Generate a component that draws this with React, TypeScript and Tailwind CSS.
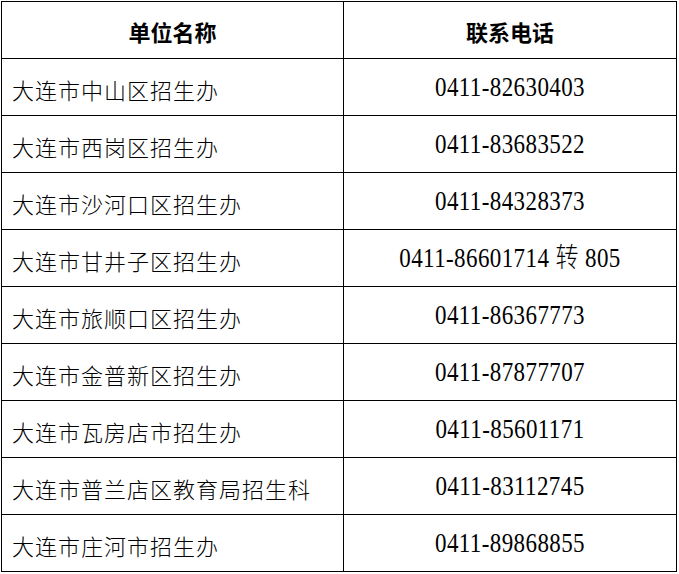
import React from "react";

const rows: [string, string][] = [
  ["大连市中山区招生办", "0411-82630403"],
  ["大连市西岗区招生办", "0411-83683522"],
  ["大连市沙河口区招生办", "0411-84328373"],
  ["大连市甘井子区招生办", "0411-86601714 转 805"],
  ["大连市旅顺口区招生办", "0411-86367773"],
  ["大连市金普新区招生办", "0411-87877707"],
  ["大连市瓦房店市招生办", "0411-85601171"],
  ["大连市普兰店区教育局招生科", "0411-83112745"],
  ["大连市庄河市招生办", "0411-89868855"],
];

export default function App() {
  return (
    <div className="w-[679px] h-[574px] bg-white pt-[1px] pl-[1px] font-['Liberation_Serif','Noto_Sans_CJK_SC',serif]">
      <div className="grid grid-cols-[342px_333px] w-[676px] border-l border-t border-black text-black">
        <div className="h-[57px] border-r border-b border-black flex items-center justify-center font-bold text-[22px] pt-[2px] font-['Noto_Sans_CJK_SC',sans-serif]">
          单位名称
        </div>
        <div className="h-[57px] border-r border-b border-black flex items-center justify-center font-bold text-[22px] pt-[2px] font-['Noto_Sans_CJK_SC',sans-serif]">
          联系电话
        </div>
        {rows.map(([name, tel]) => (
          <React.Fragment key={name}>
            <div className="h-[57px] border-r border-b border-black flex items-center pl-[10px] pt-[4px] text-[22px] tracking-[1px] font-light font-['Noto_Sans_CJK_SC',sans-serif]">
              {name}
            </div>
            <div className="h-[57px] border-r border-b border-black flex items-center justify-center pt-[3px] text-[23px] tracking-[0.4px] font-light">
              <span className="inline-block scale-y-[1.18]">{tel}</span>
            </div>
          </React.Fragment>
        ))}
      </div>
    </div>
  );
}
